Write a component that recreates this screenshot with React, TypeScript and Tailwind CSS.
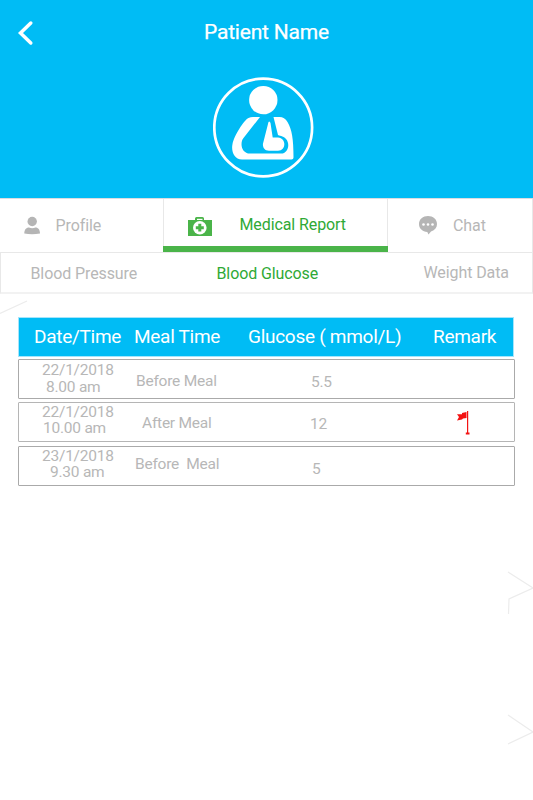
type CellProps = { className: string; children: string };

function Label({ className, children }: CellProps) {
  return <span className={`block shrink-0 whitespace-pre ${className}`}>{children}</span>;
}

function PatientLogo() {
  return (
    <svg className="mt-[77px] h-[101px] w-[101px]" viewBox="213 77 101 101" fill="#fff">
      <circle cx="263.2" cy="127.5" r="48.9" fill="none" stroke="#fff" strokeWidth="2.7" />
      <circle cx="263.3" cy="100.1" r="14.2" />
      <path d="M253 117 H260 L243.5 138 C239.5 143 241.5 153.5 250 153.5 H281 C288 153.5 290.5 144 286 139 C283 135.5 279 136 278 135 L273.5 117 H279.5 Q284.5 117 287.5 122 C292 130 293.5 139 293.5 157.500 Q293.500 159.5 291.500 159.5 H242 C234 159.5 231 151 232.5 144 C234 136 244 120 248.5 118 Q250.500 117 253 117 Z" />
      <path d="M268.500 122 Q269.500 120.500 270.500 123 L272.700 137.500 H278 C286.500 138 286.500 150.700 278 150.700 H269 C265 150.700 262.800 148 262.900 144 Z" />
    </svg>
  );
}

function MedicalKit() {
  return (
    <svg className="ml-[25px] mt-[18px] h-[20px] w-[24px] shrink-0" viewBox="0 0 24 20">
      <path d="M0 3H7V1.500Q7 0 8.500 0H14.500Q16 0 16 1.500V3H24V19H0Z" fill="#4ab449" />
      <path d="M9 3V1.800H14.500V3Z" fill="#fff" />
      <circle cx="11.800" cy="10.700" r="6.800" fill="#fff" />
      <path d="M10.300 6.800h3v2.400h2.500v3h-2.500v2.400h-3v-2.400H7.800V9.200h2.500Z" fill="#4ab449" />
    </svg>
  );
}

const rows = [
  {
    box: "mt-px border-[#aaa]",
    date: "22/1/2018",
    dateClass: "ml-[23px] mt-[2px]",
    time: "8.00 am",
    timeClass: "ml-[27px] mt-px",
    meal: "Before Meal",
    mealClass: "ml-[117px] mt-[13px]",
    value: "5.5",
    valueClass: "ml-[292px] mt-[14px]",
    flag: false,
  },
  {
    box: "mt-[3px] border-[#b5b5b5]",
    date: "22/1/2018",
    dateClass: "ml-[23px] mt-px",
    time: "10.00 am",
    timeClass: "ml-[24px] mt-0",
    meal: "After Meal",
    mealClass: "ml-[123px] mt-[12px]",
    value: "12",
    valueClass: "ml-[291px] mt-[13px]",
    flag: true,
  },
  {
    box: "mt-[4px] border-[#aaa]",
    date: "23/1/2018",
    dateClass: "ml-[23px] mt-px",
    time: "9.30 am",
    timeClass: "ml-[31px] mt-0",
    meal: "Before  Meal",
    mealClass: "ml-[116px] mt-[9px]",
    value: "5",
    valueClass: "ml-[293px] mt-[14px]",
    flag: false,
  },
];

export default function App() {
  return (
    <div className="relative h-[800px] w-[533px] overflow-hidden bg-white font-['Roboto',sans-serif] text-[15.5px] leading-4 tracking-[-0.23px] text-[#b7b7b7]">
      <header className="grid h-[198px] bg-[#00bcf5] text-white">
        <svg className="col-start-1 row-start-1 ml-[17px] mt-[20px] h-[26px] w-[18px]" viewBox="0 0 18 26" fill="none" stroke="#fff" strokeWidth="3.500" strokeLinecap="round">
          <path d="M13.800 3 3.500 13 13.800 23" />
        </svg>
        <h1 className="col-start-1 row-start-1 ml-[204px] mt-[20px] whitespace-nowrap text-[21px] leading-[25px] tracking-[-0.2px] [-webkit-text-stroke:0.25px_#fff]">Patient Name</h1>
        <div className="col-start-1 row-start-1 flex justify-center pr-[7px]">
          <PatientLogo />
        </div>
      </header>

      <nav className="flex h-[54px] border-t border-[#dcdce2] text-[16px] tracking-[-0.1px]">
        <div className="flex w-[163px]">
          <svg className="ml-[24px] mt-[17px] h-[19px] w-[17px]" viewBox="0 0 17 19" fill="#b5b5b5">
            <circle cx="8.200" cy="5.500" r="4.700" />
            <path d="M.3 17.500C.3 13 3 11.500 5 11.500Q8.200 12.900 11.400 11.500C13.500 11.500 16 13 16 17.500Q8 18.800.3 17.500Z" />
          </svg>
          <Label className="ml-[14.500px] mt-[19px]">Profile</Label>
        </div>
        <div className="flex w-[225px] border-b-[6px] border-[#4ab449] bg-[linear-gradient(#e8e8e8,#e8e8e8),linear-gradient(#e8e8e8,#e8e8e8)] bg-[length:1px_100%] bg-[position:left,right] bg-no-repeat text-[#2fa936]">
          <MedicalKit />
          <Label className="ml-[27.500px] mt-[18px]">Medical Report</Label>
        </div>
        <div className="flex flex-1 border-r border-[#e8e8e8]">
          <svg className="ml-[31px] mt-[17px] h-[19px] w-[19px]" viewBox="0 0 19 19">
            <path d="M9 0C14 0 18 3.200 18 8C18 11.500 16 14 12 15.500L9.500 18.500 8.300 16C3.500 15.500 0 12.800 0 8C0 3.200 4 0 9 0Z" fill="#b5b5b5" />
            <g fill="#fff"><circle cx="4.500" cy="8.500" r="1.300" /><circle cx="9" cy="8.500" r="1.300" /><circle cx="13.500" cy="8.500" r="1.300" /></g>
          </svg>
          <Label className="ml-[15px] mt-[19px]">Chat</Label>
        </div>
      </nav>

      <nav className="flex h-[42px] border-x border-b-2 border-t border-[#e8e8e8] border-b-[#f2f2f2] text-[16px] tracking-[-0.1px]">
        <Label className="ml-[29.500px] mt-[13px] w-[186px]">Blood Pressure</Label>
        <Label className="mt-[13px] w-[207px] text-[#2fa936]">Blood Glucose</Label>
        <Label className="mt-[12px]">Weight Data</Label>
      </nav>

      <main className="ml-[18px] mt-[23px] w-[497px]">
        <div className="flex h-[40px] w-[496px] border border-[#a5e5fb] bg-[#00bcf5] text-[19px] leading-5 tracking-[-0.28px] text-white">
          <Label className="ml-[15px] mt-[9px] w-[100px]">Date/Time</Label>
          <Label className="mt-[9px] w-[114px]">Meal Time</Label>
          <Label className="mt-[9px] w-[185px]">Glucose ( mmol/L)</Label>
          <Label className="mt-[9px]">Remark</Label>
        </div>
        <div className="pt-px">
          {rows.map((row, i) => (
            <div key={i} className={`grid h-[40px] grid-cols-1 grid-rows-1 rounded-[1px] border ${row.box}`}>
              <div className="col-start-1 row-start-1">
                <Label className={row.dateClass}>{row.date}</Label>
                <Label className={row.timeClass}>{row.time}</Label>
              </div>
              <Label className={`col-start-1 row-start-1 ${row.mealClass}`}>{row.meal}</Label>
              <Label className={`col-start-1 row-start-1 ${row.valueClass}`}>{row.value}</Label>
              {row.flag && (
                <svg className="col-start-1 row-start-1 ml-[438px] mt-[7px] h-[26px] w-[15px]" viewBox="0 0 15 26" fill="#f31313">
                  <path d="M0 4.200 5 4.200V3L9.500 2V8L6 8.500 5 9.500 0 10.500 2 7Z" />
                  <path d="M10 1h1.200v22H10Z" /><path d="M8.800 22.500h3.700V24.500H8.800Z" />
                </svg>
              )}
            </div>
          ))}
        </div>
      </main>

      <svg className="pointer-events-none absolute inset-0 h-[800px] w-[533px]" viewBox="0 0 533 800" fill="none" stroke="#ececec" strokeWidth="1.200">
        <path d="M0 313.500 27 301M508 572 533 588 509 599 508.500 614M508 715 533 732 508 744" />
      </svg>
    </div>
  );
}
